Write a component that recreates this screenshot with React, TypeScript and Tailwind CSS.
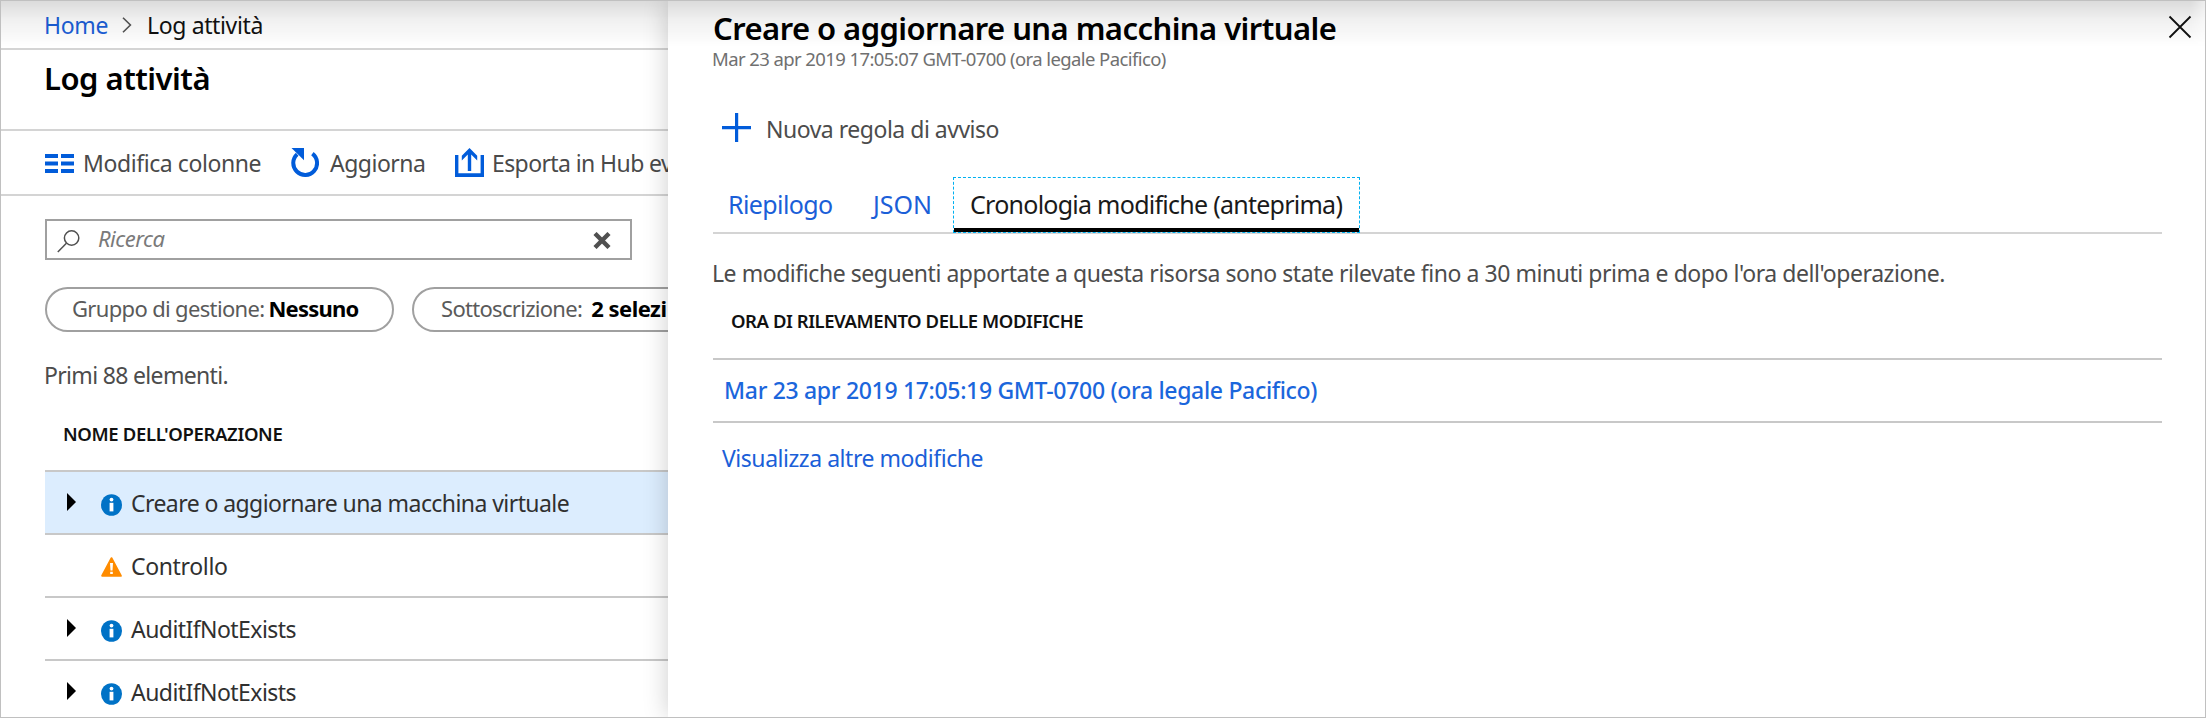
import type { ReactNode } from "react";

const BLUE = "#015cda";

function ColumnsIcon() {
  return (
    <svg width="29" height="19" viewBox="0 0 29 19" fill={BLUE} className="shrink-0">
      <path d="M0 0h13v4H0zM16 0h13v4H16zM0 7.5h13v4H0zM16 7.5h13v4H16zM0 15h13v4H0zM16 15h13v4H16z" />
    </svg>
  );
}

function RefreshIcon() {
  return (
    <svg width="28" height="29" viewBox="0 0 28 29" className="-mt-0.5 shrink-0">
      <path d="M6.2 6.2A11.9 11.9 0 1 0 21.4 5.6" fill="none" stroke={BLUE} strokeWidth="4" />
      <path d="M0.5 0h12.5v12.2z" fill={BLUE} />
    </svg>
  );
}

function ExportIcon() {
  return (
    <svg width="29" height="29" viewBox="0 0 29 29" fill={BLUE} className="-mt-0.5 shrink-0">
      <path d="M0 7h3.4v18.2h22.2V7H29v22H0z" />
      <path d="M14.5 0 22.2 7.8v4.6L16.2 6.6V23h-3.4V6.6L6.8 12.4V7.8z" />
    </svg>
  );
}

function InfoIcon() {
  return (
    <svg width="21" height="22" viewBox="0 0 21 22">
      <ellipse cx="10.5" cy="11" rx="10.5" ry="10.8" fill="#0072c6" />
      <circle cx="10.5" cy="5.6" r="1.9" fill="#fff" />
      <rect x="8.6" y="8.8" width="3.8" height="8.6" fill="#fff" />
    </svg>
  );
}

function WarningIcon() {
  return (
    <svg width="21" height="20" viewBox="0 0 21 20" className="-mt-0.5">
      <path d="M10.5 1.2 19.8 18.8H1.2z" fill="#ff8c00" stroke="#ff8c00" strokeWidth="2" strokeLinejoin="round" />
      <path d="M9 6h3l-.5 7.4h-2zM9.2 14.8h2.6v2.3H9.2z" fill="#fff" />
    </svg>
  );
}

function Row({ label, tracking, kind = "info", expandable = true, selected = false }: {
  label: string;
  tracking: string;
  kind?: "info" | "warning";
  expandable?: boolean;
  selected?: boolean;
}) {
  return (
    <div className={`flex h-[63px] shrink-0 items-center border-t-2 border-[#c8c8c8] pl-[22px] text-[23px] leading-[30px] text-[#303030] ${selected ? "bg-[#dcedfe]" : ""}`}>
      <div className="w-[34px]">
        {expandable && (
          <svg width="9" height="18" viewBox="0 0 9 18" className="-mt-px">
            <path d="M0 0 9 9 0 18z" fill="#000" />
          </svg>
        )}
      </div>
      <div className="w-[30px] pt-1">{kind === "info" ? <InfoIcon /> : <WarningIcon />}</div>
      <span className={tracking}>{label}</span>
    </div>
  );
}

function Pill({ width, children }: { width: string; children: ReactNode }) {
  return (
    <div className={`flex h-[45px] shrink-0 items-center rounded-full border-2 border-[#a0a0a0] pb-[2px] text-[22px] ${width}`}>
      {children}
    </div>
  );
}

function ActivityLog() {
  return (
    <main className="flex w-[667px] shrink-0 flex-col overflow-hidden whitespace-nowrap">
      <nav className="flex h-[49px] shrink-0 items-center border-b-2 border-[#d4d4d4] pt-px pl-[43px] text-[23px]">
        <a className="tracking-[-0.35px] text-[#1b5fd8]">Home</a>
        <svg width="10" height="16" viewBox="0 0 10 16" className="mr-[15px] ml-[14px]">
          <path d="M1 .8 8.4 8 1 15.2" fill="none" stroke="#555" strokeWidth="1.6" />
        </svg>
        <span className="tracking-[-0.37px] text-[#111]">Log attività</span>
      </nav>
      <header className="h-[81px] shrink-0 border-b-2 border-[#d4d4d4] pt-[10px] pl-[43px]">
        <h1 className="text-[31px] leading-9 font-semibold tracking-[-0.5px] text-black">Log attività</h1>
      </header>
      <div className="flex h-[65px] shrink-0 items-center border-b-2 border-[#d4d4d4] pt-px pl-[44px] text-[23px] text-[#4a4a4a]">
        <ColumnsIcon />
        <span className="ml-[9px] w-[208px] shrink-0 tracking-[-0.42px]">Modifica colonne</span>
        <RefreshIcon />
        <span className="ml-[11px] w-[125px] shrink-0 tracking-[-0.5px]">Aggiorna</span>
        <ExportIcon />
        <span className="ml-[8px] shrink-0 tracking-[-0.6px]">Esporta in Hub ev</span>
      </div>
      <div className="mt-[23px] ml-[44px] flex h-[41px] w-[587px] shrink-0 items-center border-2 border-[#a0a0a0] pl-[10px]">
        <svg width="23" height="23" viewBox="0 0 23 23" className="mt-1" fill="none" stroke="#505050" strokeWidth="1.5">
          <circle cx="14.6" cy="8" r="7.2" />
          <path d="M9.4 13.2.8 22" />
        </svg>
        <span className="ml-[18px] flex-1 pb-[2px] text-[22px] tracking-[-0.5px] text-[#7a7a7a] italic">Ricerca</span>
        <svg width="18" height="17" viewBox="0 0 18 17" className="mt-[2px] mr-[19px]">
          <path d="M2 1.5 16 15.5M16 1.5 2 15.5" stroke="#505050" strokeWidth="4.4" />
        </svg>
      </div>
      <div className="mt-[27px] ml-[44px] flex gap-[18px]">
        <Pill width="w-[349px] pl-[25px]">
          <span className="mr-[4px] tracking-[-0.66px] text-[#5a5a5a]">Gruppo di gestione:</span>
          <b className="tracking-[-0.8px] text-black">Nessuno</b>
        </Pill>
        <Pill width="w-[400px] pl-[27px]">
          <span className="mr-[9px] tracking-[-0.7px] text-[#5a5a5a]">Sottoscrizione:</span>
          <b className="tracking-[-0.5px] text-black">2 selezi</b>
        </Pill>
      </div>
      <p className="mt-[28px] ml-[43px] text-[23px] leading-[30px] tracking-[-0.67px] text-[#4c4c4c]">Primi 88 elementi.</p>
      <div className="mt-[29px] mb-[21px] pl-[62px] text-[18.5px] leading-[30px] font-semibold tracking-[-0.35px] text-[#111]">NOME DELL'OPERAZIONE</div>
      <div className="ml-[44px] flex flex-col">
        <Row label="Creare o aggiornare una macchina virtuale" tracking="tracking-[-0.57px]" selected />
        <Row label="Controllo" tracking="tracking-[-0.35px]" kind="warning" expandable={false} />
        <Row label="AuditIfNotExists" tracking="tracking-[-0.56px]" />
        <Row label="AuditIfNotExists" tracking="tracking-[-0.56px]" />
      </div>
    </main>
  );
}

function DetailPanel() {
  return (
    <section className="relative flex flex-1 flex-col bg-white pt-[9px] pr-[43px] pl-[45px] shadow-[0_0_24px_rgba(0,0,0,0.2)]">
      <button className="absolute top-[14px] right-[13px]" aria-label="Chiudi">
        <svg width="24" height="24" viewBox="0 0 24 24">
          <path d="M1.5 1.5 22.5 22.5M22.5 1.5 1.5 22.5" stroke="#111" strokeWidth="1.8" />
        </svg>
      </button>
      <h2 className="text-[31px] leading-9 font-semibold tracking-[-0.56px] text-black">Creare o aggiornare una macchina virtuale</h2>
      <p className="-ml-px text-[18.5px] leading-[26px] tracking-[-0.59px] text-[#707070]">Mar 23 apr 2019 17:05:07 GMT-0700 (ora legale Pacifico)</p>
      <div className="mt-[42px] flex h-[30px] items-center pl-[9px] text-[23px] text-[#4c4c4c]">
        <svg width="29" height="29" viewBox="0 0 29 29" className="-mt-[3px]">
          <path d="M13 0h3.2v13H29v3.2H16.2V29H13V16.2H0V13h13z" fill={BLUE} />
        </svg>
        <span className="ml-[15px] tracking-[-0.49px]">Nuova regola di avviso</span>
      </div>
      <div className="mt-[33px] flex h-[57px] border-b-2 border-[#d4d4d4] text-[25px]">
        <div className="flex w-[142px] items-center pl-[15px] tracking-[-0.6px] text-[#1b5fd8]">Riepilogo</div>
        <div className="flex w-[98px] items-center pl-[18px] text-[#1b5fd8]">JSON</div>
        <div className="relative flex h-[56px] w-[407px] items-center border border-dashed border-[#00b0f0] pl-[16px] tracking-[-0.74px] text-[#1a1a1a]">
          Cronologia modifiche (anteprima)
          <div className="absolute inset-x-0 bottom-0 h-1 bg-black" />
        </div>
      </div>
      <p className="mt-[24px] -ml-px text-[23px] leading-[30px] tracking-[-0.45px] text-[#4c4c4c]">
        Le modifiche seguenti apportate a questa risorsa sono state rilevate fino a 30 minuti prima e dopo l'ora dell'operazione.
      </p>
      <div className="mt-[20px] mb-[24px] pl-[18px] text-[18.5px] leading-[26px] font-semibold tracking-[-0.45px] text-[#111]">ORA DI RILEVAMENTO DELLE MODIFICHE</div>
      <div className="flex h-[65px] items-center border-y-2 border-[#c8c8c8] pl-[11px] text-[23px] font-medium tracking-[-0.32px] text-[#1b66dc]">
        Mar 23 apr 2019 17:05:19 GMT-0700 (ora legale Pacifico)
      </div>
      <a className="mt-[20px] ml-[9px] text-[23px] leading-[30px] tracking-[-0.46px] text-[#1b5fd8]">Visualizza altre modifiche</a>
    </section>
  );
}

export default function App() {
  return (
    <div className="relative flex h-[718px] w-[2206px] overflow-hidden border border-[#c0c0c0] bg-white font-['Noto_Sans',sans-serif]">
      <ActivityLog />
      <DetailPanel />
      <div className="pointer-events-none absolute inset-x-0 top-0 h-[46px] bg-linear-to-b from-black/14 via-black/6 via-40% to-transparent [mask-image:linear-gradient(to_left,rgba(0,0,0,.5),#000_14px)]" />
    </div>
  );
}
